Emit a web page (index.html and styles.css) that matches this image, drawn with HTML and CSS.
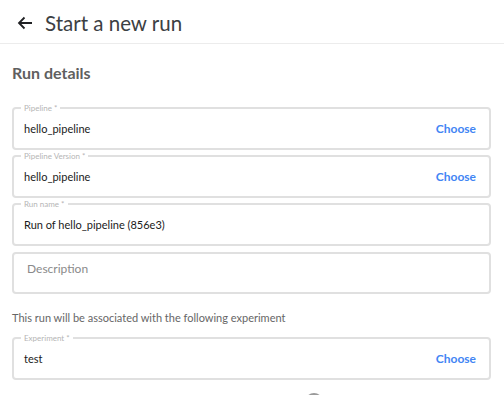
FILE: index.html
```html
<!DOCTYPE html>
<html>
<head>
    <title>Start a new run</title>
    <link rel="stylesheet" href="styles.css">
</head>
<body>
    <div class="page">
        <div class="header">
            <svg class="back-icon" width="16" height="16" viewBox="0 0 16 16">
                <path d="M15 8H2M7.5 2.5L2 8l5.5 5.5" fill="none" stroke="#202124" stroke-width="1.8"/>
            </svg>
            <span class="title">Start a new run</span>
        </div>

        <div class="content">
            <div class="section-title">Run details</div>

            <fieldset class="field">
                <legend>Pipeline *</legend>
                <div class="field-row">
                    <span class="value">hello_pipeline</span>
                    <span class="choose">Choose</span>
                </div>
            </fieldset>

            <fieldset class="field">
                <legend>Pipeline Version *</legend>
                <div class="field-row">
                    <span class="value">hello_pipeline</span>
                    <span class="choose">Choose</span>
                </div>
            </fieldset>

            <fieldset class="field">
                <legend>Run name *</legend>
                <div class="field-row">
                    <span class="value">Run of hello_pipeline (856e3)</span>
                </div>
            </fieldset>

            <div class="description">Description</div>

            <p class="hint">This run will be associated with the following experiment</p>

            <fieldset class="field">
                <legend>Experiment *</legend>
                <div class="field-row">
                    <span class="value">test</span>
                    <span class="choose">Choose</span>
                </div>
            </fieldset>

            <div class="radio-row">
                <span class="radio"></span>
            </div>
        </div>
    </div>
</body>
</html>
```

FILE: styles.css
```css
body {
    margin: 0;
    font-family: Lato, "Open Sans", sans-serif;
    background: #fff;
    color: #333;
    overflow: hidden;
}
.page {
    height: 395px;
    overflow: hidden;
}
.header {
    height: 43px;
    display: flex;
    align-items: center;
    padding-left: 17px;
    border-bottom: 1px solid #ececec;
}
.back-icon {
    margin-right: 12px;
    margin-top: 2px;
}
.title {
    font-size: 20.5px;
    color: #3c4043;
    margin-top: 3px;
}
.content {
    padding: 0 13px 0 12px;
}
.section-title {
    font-size: 16px;
    font-weight: 700;
    color: #5f5f5f;
    margin-top: 20px;
    height: 38px;
    line-height: 18px;
}
.field {
    margin: 1px 0 0;
    padding: 0 13px 4px 10px;
    border: 2px solid #e0e0e0;
    border-radius: 4px;
    min-width: 0;
}
.field legend {
    font-size: 8px;
    line-height: 10px;
    color: #b5b5b5;
    padding: 0 3px;
    margin-left: -3px;
}
.field-row {
    display: flex;
    align-items: center;
    justify-content: space-between;
    height: 31px;
}
.value {
    font-size: 11px;
    color: #1a1a1a;
}
.choose {
    font-size: 12px;
    font-weight: 700;
    color: #4285f4;
}
.description {
    margin-top: 6px;
    box-sizing: content-box;
    border: 2px solid #e0e0e0;
    border-radius: 4px;
    padding: 7px 13px 0;
    height: 31px;
    font-size: 12px;
    line-height: 16px;
    color: #8a8a8a;
}
.hint {
    font-size: 11px;
    color: #666;
    margin: 17px 0 8px;
    line-height: 14px;
}
.radio-row {
    padding-left: 293px;
    margin-top: 13px;
}
.radio {
    display: block;
    width: 14px;
    height: 14px;
    border: 2px solid #9a9a9a;
    border-radius: 50%;
}
```
